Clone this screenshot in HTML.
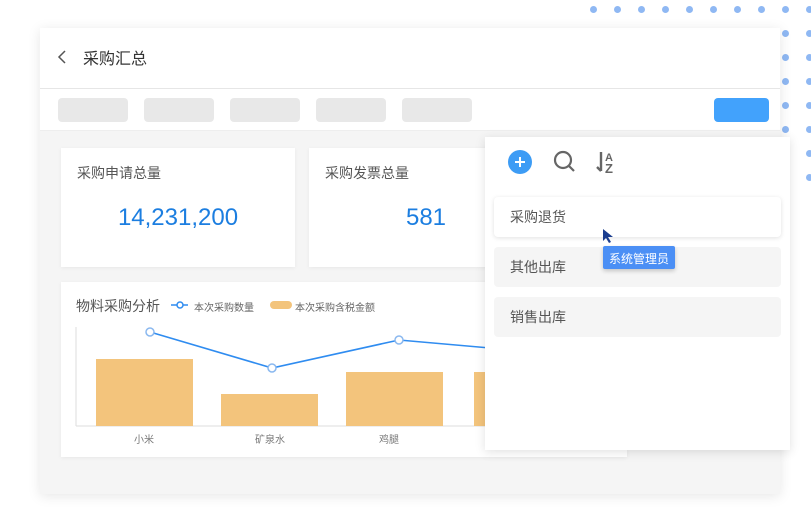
<!DOCTYPE html>
<html><head><meta charset="utf-8"><style>
*{margin:0;padding:0;box-sizing:border-box}
body{width:811px;height:532px;background:#fff;position:relative;overflow:hidden;font-family:"Liberation Sans","Noto Sans CJK SC",sans-serif}
.abs{position:absolute}
.dot{position:absolute;width:7px;height:7px;border-radius:50%;background:#8fb8f3}
.chip{position:absolute;top:98px;width:70px;height:24px;border-radius:4px;background:#e8e8e8}
.card{position:absolute;background:#fff;box-shadow:0 1px 4px rgba(0,0,0,.06)}
.lbl{font-size:14px;color:#555}
.item{position:absolute;left:494px;width:287px;height:40px;border-radius:4px;font-size:14px;color:#555;padding:10px 16px}
</style></head><body>
<div id="dots"></div>
<script>
var d=document.getElementById('dots'),h='';
for(var i=0;i<10;i++)h+='<div class="dot" style="left:'+(590+i*24)+'px;top:6px"></div>';
for(var j=1;j<8;j++){h+='<div class="dot" style="left:806px;top:'+(6+j*24)+'px"></div>';if(j<6)h+='<div class="dot" style="left:782px;top:'+(6+j*24)+'px"></div>';}
d.innerHTML=h;
</script>
<div class="abs" style="left:40px;top:28px;width:740px;height:466px;background:#f5f5f5;box-shadow:0 2px 12px rgba(0,0,0,.1)">
</div>
<div class="abs" style="left:40px;top:28px;width:740px;height:103px;background:#fff;border-bottom:1px solid #eee"></div>
<div class="abs" style="left:40px;top:88px;width:740px;height:1px;background:#e6e6e6"></div>
<svg class="abs" style="left:56px;top:49px" width="12" height="16"><path d="M9 2 L3 8 L9 14" fill="none" stroke="#555" stroke-width="1.5"/></svg>
<div class="abs" style="left:83px;top:45px;font-size:16px;color:#333">采购汇总</div>
<div class="chip" style="left:58px"></div><div class="chip" style="left:144px"></div><div class="chip" style="left:230px"></div><div class="chip" style="left:316px"></div><div class="chip" style="left:402px"></div>
<div class="abs" style="left:714px;top:98px;width:55px;height:24px;border-radius:4px;background:#42a2fc"></div>

<div class="card" style="left:61px;top:148px;width:234px;height:119px">
<div class="lbl abs" style="left:16px;top:15px">采购申请总量</div>
<div class="abs" style="left:0;width:234px;top:56px;text-align:center;font-size:24px;color:#1c7ee0">14,231,200</div></div>
<div class="card" style="left:309px;top:148px;width:234px;height:119px">
<div class="lbl abs" style="left:16px;top:15px">采购发票总量</div>
<div class="abs" style="left:0;width:234px;top:56px;text-align:center;font-size:24px;color:#1c7ee0">581</div></div>

<div class="card" style="left:61px;top:282px;width:566px;height:175px"></div>
<div class="abs" style="left:76px;top:296px;font-size:14px;color:#555">物料采购分析</div>
<svg class="abs" style="left:0;top:0" width="811" height="532">
<line x1="171" y1="305" x2="188" y2="305" stroke="#2f8cf0" stroke-width="1.5"/><circle cx="180" cy="305" r="3" fill="#fff" stroke="#2f8cf0" stroke-width="1.5"/>
<rect x="270" y="301" width="22" height="8" rx="4" fill="#f3c47c"/>
<line x1="76" y1="327" x2="76" y2="426" stroke="#ddd"/><line x1="76" y1="426" x2="490" y2="426" stroke="#ddd"/>
<rect x="96" y="359" width="97" height="67" fill="#f3c47c"/>
<rect x="221" y="394" width="97" height="32" fill="#f3c47c"/>
<rect x="346" y="372" width="97" height="54" fill="#f3c47c"/>
<rect x="474" y="372" width="20" height="54" fill="#f3c47c"/>
<polyline points="150,332 272,368 399,340 490,348" fill="none" stroke="#2f8cf0" stroke-width="1.6"/>
<circle cx="150" cy="332" r="4" fill="#fff" stroke="#8ab8ef" stroke-width="1.5"/>
<circle cx="272" cy="368" r="4" fill="#fff" stroke="#8ab8ef" stroke-width="1.5"/>
<circle cx="399" cy="340" r="4" fill="#fff" stroke="#8ab8ef" stroke-width="1.5"/>
</svg>
<div class="abs" style="left:194px;top:299px;font-size:10px;color:#666">本次采购数量</div>
<div class="abs" style="left:295px;top:299px;font-size:10px;color:#666">本次采购含税金额</div>
<div class="abs" style="left:134px;top:431px;font-size:10px;color:#777">小米</div>
<div class="abs" style="left:255px;top:431px;font-size:10px;color:#777">矿泉水</div>
<div class="abs" style="left:379px;top:431px;font-size:10px;color:#777">鸡腿</div>

<div class="abs" style="left:485px;top:137px;width:305px;height:313px;background:#fff;box-shadow:0 2px 10px rgba(0,0,0,.12)"></div>
<svg class="abs" style="left:505px;top:148px" width="120" height="28">
<circle cx="15" cy="14" r="12" fill="#3d9cf5"/><path d="M15 9v10M10 14h10" stroke="#fff" stroke-width="2"/>
<circle cx="58" cy="12" r="8" fill="none" stroke="#666" stroke-width="2.2"/><path d="M64 18l5 5" stroke="#666" stroke-width="2.2"/>
<path d="M96 4v19M92 19l4 4" fill="none" stroke="#666" stroke-width="2.4"/>
<text x="100" y="13" font-size="11" fill="#666" font-family="Liberation Sans" font-weight="bold">A</text>
<text x="100" y="25" font-size="13" fill="#666" font-family="Liberation Sans" font-weight="bold">Z</text>
</svg>
<div class="item" style="top:197px;background:#fff;box-shadow:0 1px 5px rgba(0,0,0,.12)">采购退货</div>
<div class="item" style="top:247px;background:#f5f5f5">其他出库</div>
<div class="item" style="top:297px;background:#f5f5f5">销售出库</div>
<svg class="abs" style="left:602px;top:228px" width="14" height="16"><path d="M1 1 L1 13 L4 10 L7 15 L9 14 L6 9 L11 9 Z" fill="#1a3d8f"/></svg>
<div class="abs" style="left:603px;top:246px;width:72px;height:23px;background:#4b8ff5;color:#fff;font-size:12px;padding:4px 6px;border-radius:2px;box-shadow:0 2px 4px rgba(0,0,0,.2)">系统管理员</div>
</body></html>
